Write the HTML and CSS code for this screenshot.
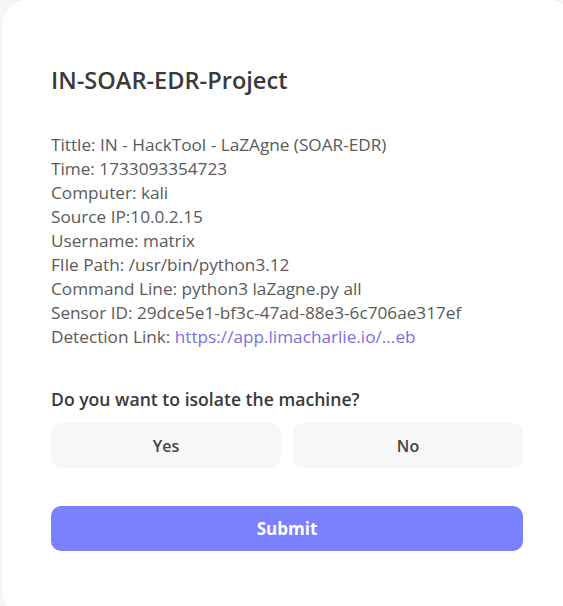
FILE: index.html
```html
<!DOCTYPE html>
<html>
<head>
<meta charset="utf-8">
<link rel="stylesheet" href="styles.css">
</head>
<body>
<div class="card">
  <h1 class="title">IN-SOAR-EDR-Project</h1>
  <div class="details">
    <div>Tittle: IN - HackTool - LaZAgne (SOAR-EDR)</div>
    <div>Time: 1733093354723</div>
    <div>Computer: kali</div>
    <div>Source IP:10.0.2.15</div>
    <div>Username: matrix</div>
    <div>FIle Path: /usr/bin/python3.12</div>
    <div>Command Line: python3 laZagne.py all</div>
    <div>Sensor ID: 29dce5e1-bf3c-47ad-88e3-6c706ae317ef</div>
    <div>Detection Link: <a class="link" href="#">https://app.limacharlie.io/...eb</a></div>
  </div>
  <div class="question">Do you want to isolate the machine?</div>
  <div class="choices">
    <button class="choice">Yes</button>
    <button class="choice">No</button>
  </div>
  <button class="submit">Submit</button>
</div>
</body>
</html>
```
FILE: styles.css
```css
html, body {
  margin: 0;
  padding: 0;
  height: 100%;
  overflow: hidden;
  background: #f6f6f6;
  font-family: "Open Sans", "Noto Sans", sans-serif;
}
.card {
  box-sizing: border-box;
  width: 572px;
  height: 617px;
  margin-left: 2px;
  background: #ffffff;
  border-radius: 24px;
  box-shadow: 0 0 0 1px #eeeeee;
  padding: 63px 51px 0 49px;
}
.title {
  margin: 0;
  font-size: 23.6px;
  font-weight: 600;
  color: #3a3a3a;
  line-height: 34px;
}
.details {
  margin-top: 36px;
  font-size: 17.2px;
  line-height: 24px;
  color: #5a5a5a;
}
.link {
  color: #7b6fdc;
  text-decoration: none;
}
.question {
  margin-top: 38px;
  font-size: 17.6px;
  font-weight: 600;
  color: #3a3a3a;
  line-height: 24px;
}
.choices {
  margin-top: 12px;
  display: flex;
  gap: 12px;
}
.choice {
  flex: 1;
  height: 45px;
  border: none;
  border-radius: 10px;
  background: #f7f7f7;
  font-family: inherit;
  font-size: 16px;
  font-weight: 600;
  color: #444444;
}
.submit {
  margin-top: 38px;
  width: 100%;
  height: 45px;
  border: none;
  border-radius: 10px;
  background: #7b80ff;
  color: #ffffff;
  font-family: inherit;
  font-size: 17px;
  font-weight: 700;
}
```
